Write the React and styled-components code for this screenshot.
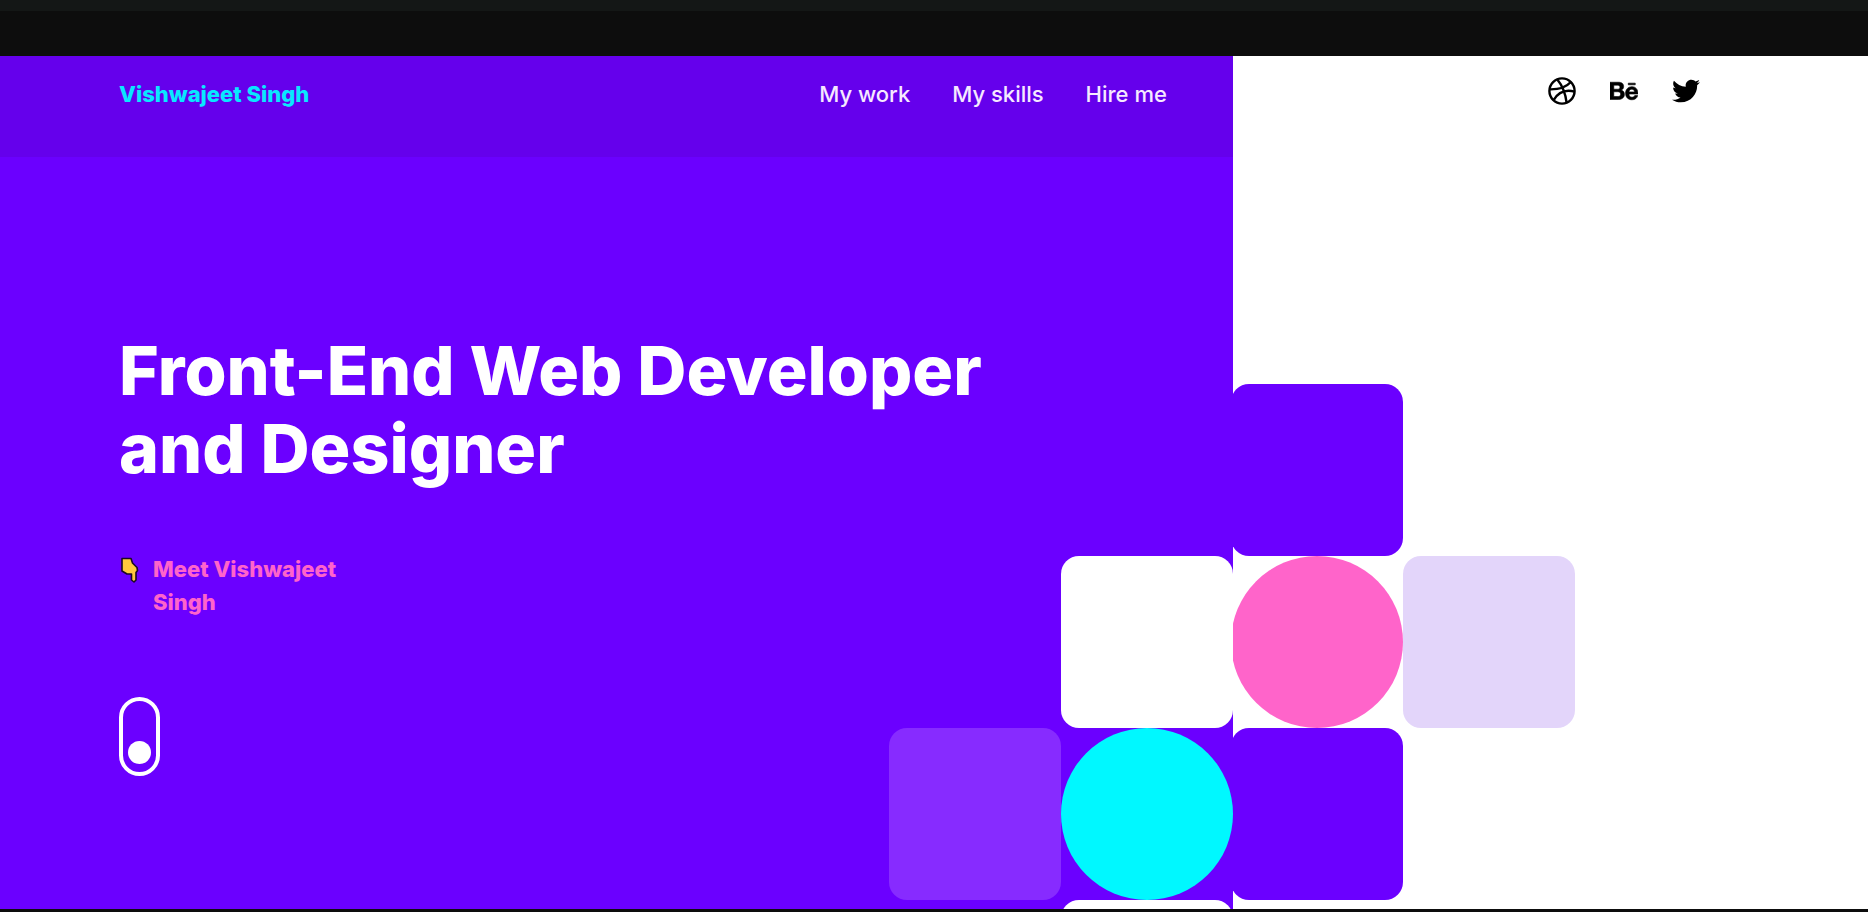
import React from "react";
import styled, { createGlobalStyle } from "styled-components";
import { FaBehance, FaTwitter } from "react-icons/fa";

const Global = createGlobalStyle`
  *, *::before, *::after { box-sizing: border-box; }
  body { margin: 0; background: #0d0d0d; font-family: Inter, "Liberation Sans", sans-serif; }
  a { color: inherit; text-decoration: none; }
`;

const Page = styled.div`
  display: flex;
  flex-direction: column;
  min-height: 100vh;
  padding-bottom: 3px;
`;

const Strip = styled.div`
  height: ${(p) => p.$height}px;
  background: ${(p) => p.$color};
`;

const Hero = styled.main`
  flex: 1;
  display: grid;
  grid-template-columns: 66% 1fr;
`;

const Panel = styled.section`
  display: grid;
  grid-template: minmax(0, 1fr) / minmax(0, 1fr);
  overflow: hidden;
  background: ${(p) => p.$color};
`;

const Content = styled.div`
  grid-area: 1 / 1;
  z-index: 1;
`;

const Pattern = styled.div`
  grid-area: 1 / 1;
  place-self: ${(p) => p.$place};
  display: grid;
  grid-template-columns: repeat(2, 172px);
  grid-template-rows: repeat(${(p) => p.$rows}, 172px) 9px;
  margin-left: ${(p) => p.$bleed || 0}px;
`;

const Tile = styled.div`
  grid-column: ${(p) => p.$col};
  grid-row: ${(p) => p.$row};
  height: 172px;
  border-radius: ${(p) => (p.$round ? "50%" : "18px")};
  background: ${(p) => p.$color};
`;

const TopBar = styled.header`
  display: flex;
  justify-content: space-between;
  height: 101px;
  padding: 24px 66px 0 119px;
  background: #6500ec;
  line-height: 28px;
`;

const Brand = styled.a`
  color: #08e8ff;
  font-size: 22px;
  font-weight: 800;
`;

const Nav = styled.nav`
  display: flex;
  gap: 42px;
  color: #f6e9ff;
  font-size: 22px;
  font-weight: 500;
`;

const Intro = styled.div`
  padding: 174px 119px 40px;
`;

const Title = styled.h1`
  margin: 0;
  max-width: 960px;
  color: #fff;
  font-size: 68px;
  font-weight: 800;
  line-height: 78px;
`;

const Meet = styled.a`
  display: flex;
  gap: 14px;
  width: 240px;
  margin-top: 66px;
  color: #ff64ca;
  font-size: 22px;
  font-weight: 800;
  line-height: 33px;
`;

const Hand = styled.svg`
  flex: none;
  width: 20px;
  height: 26px;
  margin-top: 4px;
`;

const Scroll = styled.button`
  display: flex;
  align-items: flex-end;
  justify-content: center;
  width: 41px;
  height: 79px;
  margin-top: 78px;
  padding: 0 0 8px;
  border: 4px solid #fff;
  border-radius: 21px;
  background: none;
`;

const Dot = styled.span`
  width: 23px;
  height: 23px;
  border-radius: 50%;
  background: #fff;
`;

const Social = styled.nav`
  display: flex;
  justify-content: flex-end;
  gap: 34px;
  padding: 21px 168px 0 0;
  color: #000;
  font-size: 28px;

  a { display: flex; }
`;

const Dribbble = () => (
  <svg width="28" height="28" viewBox="0 0 28 28" fill="none" stroke="currentColor" strokeWidth="2.4" aria-hidden="true">
    <circle cx="14" cy="14" r="12.6" />
    <path d="M9.3 2.4 C14 8 17.4 15.5 18.6 25.6" />
    <path d="M1.5 12.4 C10 12.6 17.5 11 22.8 5" />
    <path d="M5.6 23.2 C10 15.5 17 12.2 26.5 14.6" />
  </svg>
);

export default function App() {
  return (
    <>
      <Global />
      <Page>
        <Strip $height={11} $color="#141716" />
        <Strip $height={45} $color="#0d0d0d" />
        <Hero>
          <Panel $color="#6b00ff">
            <Content>
              <TopBar>
                <Brand href="#home">Vishwajeet Singh</Brand>
                <Nav>
                  <a href="#work">My work</a>
                  <a href="#skills">My skills</a>
                  <a href="#hire">Hire me</a>
                </Nav>
              </TopBar>
              <Intro>
                <Title>Front-End Web Developer<br />and Designer</Title>
                <Meet href="#about">
                  <Hand viewBox="0 0 20 26" aria-hidden="true">
                    <path
                      d="M3 1.5 H12 L13.5 6 L18 10.5 L18.5 13.5 L17 15.5 V23 L15 25 L12.5 23 V17 L8 17 L3 14 Z"
                      fill="#ffc83d"
                      stroke="#1c0a24"
                      strokeWidth="1.6"
                      strokeLinejoin="round"
                    />
                  </Hand>
                  <span>Meet Vishwajeet Singh</span>
                </Meet>
                <Scroll type="button" aria-label="Scroll down"><Dot /></Scroll>
              </Intro>
            </Content>
            <Pattern $place="end" $rows={2}>
              <Tile $col={2} $row={1} $color="#fff" />
              <Tile $col={1} $row={2} $color="#872bff" />
              <Tile $col={2} $row={2} $color="#00f8ff" $round />
              <Tile $col={2} $row={3} $color="#fff" />
            </Pattern>
          </Panel>
          <Panel $color="#fff">
            <Content>
              <Social aria-label="Social profiles">
                <a href="#dribbble" aria-label="Dribbble"><Dribbble /></a>
                <a href="#behance" aria-label="Behance"><FaBehance stroke="#000" strokeWidth="12" /></a>
                <a href="#twitter" aria-label="Twitter"><FaTwitter /></a>
              </Social>
            </Content>
            <Pattern $place="end start" $rows={3} $bleed={-2}>
              <Tile $col={1} $row={1} $color="#6b00ff" />
              <Tile $col={1} $row={2} $color="#ff64ca" $round />
              <Tile $col={2} $row={2} $color="#e3d5fa" />
              <Tile $col={1} $row={3} $color="#6b00ff" />
            </Pattern>
          </Panel>
        </Hero>
      </Page>
    </>
  );
}
